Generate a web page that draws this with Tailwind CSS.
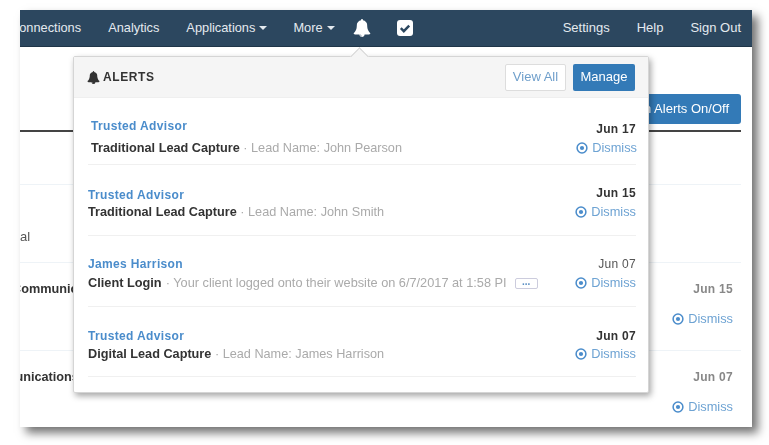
<!DOCTYPE html>
<html lang="en">
<head>
<meta charset="UTF-8">
<title>Alerts</title>
<script src="https://cdn.jsdelivr.net/npm/@tailwindcss/browser@4"></script>
</head>
<body class="bg-white font-['Liberation_Sans',Arial,sans-serif] text-[12px] text-[#333] overflow-hidden">
<div class="pl-[20px] pt-[10px] h-[445px] w-[769px]">
  <!-- window -->
  <div class="relative w-[732px] h-[417px] bg-white overflow-hidden shadow-[6px_6px_9px_rgba(0,0,0,0.55)] blur-[0.5px]">
    <!-- nav -->
    <div class="h-[37px] bg-[#2c475f] border-b border-[#1f3548] text-[#e4eaef] text-[12.8px] flex items-center overflow-hidden whitespace-nowrap">
      <span class="-ml-[10px]">Connections</span>
      <span class="ml-[27px]">Analytics</span>
      <span class="ml-[27px] flex items-center gap-[4px]">Applications <i class="w-0 h-0 border-x-[4px] border-x-transparent border-t-[4px] border-t-[#e4eaef]"></i></span>
      <span class="ml-[26px] flex items-center gap-[4px]">More <i class="w-0 h-0 border-x-[4px] border-x-transparent border-t-[4px] border-t-[#e4eaef]"></i></span>
      <svg class="ml-[18px] w-[18px] h-[18px]" viewBox="0 0 1792 1792" fill="#fff"><path d="M912 1696q0-16-16-16-59 0-101.5-42.5t-42.5-101.5q0-16-16-16t-16 16q0 73 51.5 124.5t124.5 51.5q16 0 16-16zm816-288q0 52-38 90t-90 38h-448q0 106-75 181t-181 75-181-75-75-181h-448q-52 0-90-38t-38-90q50-42 91-88t85-119.5 74.5-158.5 50-206 19.5-260q0-152 117-282.5t307-158.5q-8-19-8-39 0-40 28-68t68-28 68 28 28 68q0 20-8 39 190 28 307 158.5t117 282.5q0 139 19.5 260t50 206 74.5 158.5 85 119.5 91 88z"/></svg>
      <svg class="ml-[26px] w-[16px] h-[16px]" viewBox="0 0 16 16"><rect width="16" height="16" rx="3" fill="#fff"/><path d="M3.8 8.2l3 3 5.4-5.6" fill="none" stroke="#2c475f" stroke-width="2.4"/></svg>
      <div class="ml-auto pr-[11px] flex gap-[27px] text-[13px]">
        <span>Settings</span>
        <span>Help</span>
        <span>Sign Out</span>
      </div>
    </div>

    <!-- page behind the popover -->
    <div class="pr-[11px]">
      <div class="h-[85px] border-b-2 border-[#444] flex justify-end items-start pt-[47px]">
        <button class="h-[30px] px-[12px] bg-[#337ab7] text-white text-[13px] rounded-[3px]">Turn Alerts On/Off</button>
      </div>
      <div class="h-[53px] border-b border-[#eef3f7]"></div>
      <div class="h-[78px] border-b border-[#eef3f7] pt-[43px] text-[#555] text-[13px] leading-[17px]">al</div>
      <div class="h-[88px] border-b border-[#eef3f7] pt-[18px] flex justify-between pr-[8px]">
        <b class="-ml-[8px] text-[12.7px] leading-[16px]">Communications</b>
        <div class="text-right">
          <b class="block text-[#888] tracking-[0.3px] leading-[16px]">Jun 15</b>
          <div class="mt-[14px] flex items-center justify-end gap-[4px] text-[#6ea3d3] text-[12.8px] leading-[16px]">
            <svg class="w-[12px] h-[12px]" viewBox="0 0 12 12"><circle cx="6" cy="6" r="4.9" fill="none" stroke="#4a8ccb" stroke-width="1.5"/><circle cx="6" cy="6" r="2.1" fill="#4a8ccb"/></svg>Dismiss
          </div>
        </div>
      </div>
      <div class="pt-[18px] flex justify-between pr-[8px]">
        <b class="-ml-[44px] text-[12.7px] leading-[16px]">Communications</b>
        <div class="text-right">
          <b class="block text-[#888] tracking-[0.3px] leading-[16px]">Jun 07</b>
          <div class="mt-[14px] flex items-center justify-end gap-[4px] text-[#6ea3d3] text-[12.8px] leading-[16px]">
            <svg class="w-[12px] h-[12px]" viewBox="0 0 12 12"><circle cx="6" cy="6" r="4.9" fill="none" stroke="#4a8ccb" stroke-width="1.5"/><circle cx="6" cy="6" r="2.1" fill="#4a8ccb"/></svg>Dismiss
          </div>
        </div>
      </div>
    </div>

    <!-- popover -->
    <div class="absolute left-[53px] top-[46px] w-[576px] h-[337px] bg-white border border-[#d5d5d5] rounded-[2px] shadow-[2px_3px_6px_rgba(0,0,0,0.35)]">
      <div class="absolute left-[279px] -top-[7px] w-[13px] h-[13px] rotate-45 bg-[#f5f5f5] border-l border-t border-[#d5d5d5]"></div>
      <div class="relative h-[41px] bg-[#f5f5f5] border-b border-[#efefef] flex items-center pl-[13px] pr-[13px]">
        <svg class="w-[13px] h-[13px] mr-[3px]" viewBox="0 0 1792 1792" fill="#333"><path d="M912 1696q0-16-16-16-59 0-101.5-42.5t-42.5-101.5q0-16-16-16t-16 16q0 73 51.5 124.5t124.5 51.5q16 0 16-16zm816-288q0 52-38 90t-90 38h-448q0 106-75 181t-181 75-181-75-75-181h-448q-52 0-90-38t-38-90q50-42 91-88t85-119.5 74.5-158.5 50-206 19.5-260q0-152 117-282.5t307-158.5q-8-19-8-39 0-40 28-68t68-28 68 28 28 68q0 20-8 39 190 28 307 158.5t117 282.5q0 139 19.5 260t50 206 74.5 158.5 85 119.5 91 88z"/></svg>
        <b class="tracking-[0.6px]">ALERTS</b>
        <button class="ml-auto h-[27px] w-[61px] bg-white border border-[#ddd] rounded-[2px] text-[#6f9fcb] text-[13px]">View All</button>
        <button class="ml-[7px] h-[27px] w-[62px] bg-[#337ab7] rounded-[2px] text-white text-[13px]">Manage</button>
      </div>
      <div class="pl-[14px] pr-[12px]">
        <div class="h-[67px] border-b border-[#f0f0f0] flex justify-between pt-[20px]">
          <div class="pl-[3px]">
            <div class="text-[#4a8ccb] font-bold tracking-[0.35px] leading-[16px]">Trusted Advisor</div>
            <div class="mt-[5px] leading-[16px] text-[12.7px] pt-[1px]"><b>Traditional Lead Capture</b><span class="text-[#aaa]"> · Lead Name: John Pearson</span></div>
          </div>
          <div class="text-right pt-[3px]">
            <b class="block tracking-[0.3px] leading-[16px]">Jun 17</b>
            <div class="mt-[3px] flex items-center justify-end gap-[4px] text-[#6ea3d3] text-[12.8px] leading-[16px] -mr-[1px]">
              <svg class="w-[12px] h-[12px]" viewBox="0 0 12 12"><circle cx="6" cy="6" r="4.9" fill="none" stroke="#4a8ccb" stroke-width="1.5"/><circle cx="6" cy="6" r="2.1" fill="#4a8ccb"/></svg>Dismiss
            </div>
          </div>
        </div>
        <div class="h-[71px] border-b border-[#f0f0f0] flex justify-between pt-[22px]">
          <div>
            <div class="text-[#4a8ccb] font-bold tracking-[0.35px] leading-[16px]">Trusted Advisor</div>
            <div class="mt-[1px] leading-[16px] text-[12.7px]"><b>Traditional Lead Capture</b><span class="text-[#aaa]"> · Lead Name: John Smith</span></div>
          </div>
          <div class="text-right -mt-[2px]">
            <b class="block tracking-[0.3px] leading-[16px]">Jun 15</b>
            <div class="mt-[3px] flex items-center justify-end gap-[4px] text-[#6ea3d3] text-[12.8px] leading-[16px]">
              <svg class="w-[12px] h-[12px]" viewBox="0 0 12 12"><circle cx="6" cy="6" r="4.9" fill="none" stroke="#4a8ccb" stroke-width="1.5"/><circle cx="6" cy="6" r="2.1" fill="#4a8ccb"/></svg>Dismiss
            </div>
          </div>
        </div>
        <div class="h-[71px] border-b border-[#f0f0f0] flex justify-between pt-[20px]">
          <div>
            <div class="text-[#4a8ccb] font-bold tracking-[0.35px] leading-[16px]">James Harrison</div>
            <div class="mt-[3px] leading-[16px] text-[12.75px] flex items-center whitespace-nowrap"><b>Client Login</b><span class="text-[#aaa] ml-[4px]">· Your client logged onto their website on 6/7/2017 at 1:58 PI</span>
              <span class="ml-[8px] w-[23px] h-[11px] border border-[#ccd] rounded-[2px] text-[#5b8fc4] text-[10px] leading-[6px] text-center font-bold">...</span>
            </div>
          </div>
          <div class="text-right">
            <div class="tracking-[0.3px] leading-[16px] text-[#555]">Jun 07</div>
            <div class="mt-[3px] flex items-center justify-end gap-[4px] text-[#6ea3d3] text-[12.8px] leading-[16px]">
              <svg class="w-[12px] h-[12px]" viewBox="0 0 12 12"><circle cx="6" cy="6" r="4.9" fill="none" stroke="#4a8ccb" stroke-width="1.5"/><circle cx="6" cy="6" r="2.1" fill="#4a8ccb"/></svg>Dismiss
            </div>
          </div>
        </div>
        <div class="h-[70px] border-b border-[#f0f0f0] flex justify-between pt-[21px]">
          <div>
            <div class="text-[#4a8ccb] font-bold tracking-[0.35px] leading-[16px]">Trusted Advisor</div>
            <div class="mt-[2px] leading-[16px] text-[12.7px]"><b>Digital Lead Capture</b><span class="text-[#aaa]"> · Lead Name: James Harrison</span></div>
          </div>
          <div class="text-right">
            <b class="block tracking-[0.3px] leading-[16px]">Jun 07</b>
            <div class="mt-[2px] flex items-center justify-end gap-[4px] text-[#6ea3d3] text-[12.8px] leading-[16px]">
              <svg class="w-[12px] h-[12px]" viewBox="0 0 12 12"><circle cx="6" cy="6" r="4.9" fill="none" stroke="#4a8ccb" stroke-width="1.5"/><circle cx="6" cy="6" r="2.1" fill="#4a8ccb"/></svg>Dismiss
            </div>
          </div>
        </div>
      </div>
    </div>
  </div>
</div>
</body>
</html>
